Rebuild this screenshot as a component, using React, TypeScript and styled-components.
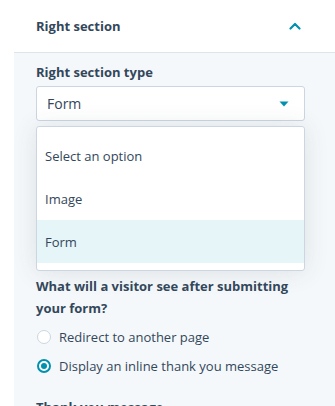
import React, { useState } from "react"
import styled, { createGlobalStyle } from "styled-components"

const Colors = {
    text: "#33475b",
    border: "#cbd6e2",
    divider: "#dfe3eb",
    panelBg: "#f5f8fa",
    teal: "#0091ae",
    highlight: "#e5f5f8",
}

const GlobalStyle = createGlobalStyle`
    html, body {
        margin: 0;
        padding: 0;
        background: #fff;
    }
    body {
        font-family: "Open Sans", "Liberation Sans", sans-serif;
        color: ${Colors.text};
        overflow: hidden;
    }
`

type SectionType = "" | "image" | "form"
type AfterSubmit = "redirect" | "inline"

const options: { value: SectionType; label: string }[] = [
    { value: "", label: "Select an option" },
    { value: "image", label: "Image" },
    { value: "form", label: "Form" },
]

const radios: { value: AfterSubmit; label: string }[] = [
    { value: "redirect", label: "Redirect to another page" },
    { value: "inline", label: "Display an inline thank you message" },
]

const ChevronUp = () => (
    <svg width="12" height="8" viewBox="0 0 12 8" fill="none">
        <path d="M1.5 6.5L6 2L10.5 6.5" stroke={Colors.teal} strokeWidth="2.2" strokeLinecap="round" strokeLinejoin="round" />
    </svg>
)

const Caret = () => (
    <svg width="10" height="6" viewBox="0 0 10 6">
        <path d="M0.5 0.5H9.5L5 5.5Z" fill={Colors.teal} />
    </svg>
)

export default function App() {
    const [sectionType, setSectionType] = useState<SectionType>("form")
    const [afterSubmit, setAfterSubmit] = useState<AfterSubmit>("inline")
    const current = options.find((o) => o.value === sectionType)

    return (
        <S.Page>
            <GlobalStyle />
            <S.Gutter />
            <S.Panel>
                <S.Header>
                    <S.HeaderTitle>Right section</S.HeaderTitle>
                    <ChevronUp />
                </S.Header>
                <S.Body>
                    <S.Label>Right section type</S.Label>
                    <S.Select>
                        <span>{current ? current.label : ""}</span>
                        <Caret />
                    </S.Select>
                    <S.Menu>
                        {options.map((o) => (
                            <S.Option
                                key={o.label}
                                $active={o.value === sectionType}
                                onClick={() => setSectionType(o.value)}
                            >
                                {o.label}
                            </S.Option>
                        ))}
                    </S.Menu>
                    <S.Question>What will a visitor see after submitting your form?</S.Question>
                    <S.RadioGroup>
                        {radios.map((r) => (
                            <S.RadioRow key={r.value} onClick={() => setAfterSubmit(r.value)}>
                                <S.RadioCircle $checked={afterSubmit === r.value} />
                                {r.label}
                            </S.RadioRow>
                        ))}
                    </S.RadioGroup>
                    <S.NextLabel>Thank you message</S.NextLabel>
                </S.Body>
            </S.Panel>
        </S.Page>
    )
}

const S = {
    Page: styled.div`
        display: flex;
        width: 335px;
        height: 406px;
        overflow: hidden;
    `,
    Gutter: styled.div`
        width: 14px;
        flex-shrink: 0;
        background: #fff;
    `,
    Panel: styled.div`
        flex: 1;
        display: flex;
        flex-direction: column;
    `,
    Header: styled.div`
        height: 52px;
        flex-shrink: 0;
        display: flex;
        align-items: center;
        justify-content: space-between;
        padding: 0 34px 0 22px;
        background: #fff;
        border-bottom: 1px solid ${Colors.divider};
    `,
    HeaderTitle: styled.div`
        font-size: 13px;
        font-weight: 700;
    `,
    Body: styled.div`
        flex: 1;
        background: ${Colors.panelBg};
        padding: 9px 30px 0 22px;
        display: flex;
        flex-direction: column;
    `,
    Label: styled.div`
        font-size: 13px;
        font-weight: 700;
        line-height: 20px;
        margin-bottom: 4px;
    `,
    Select: styled.div`
        height: 35px;
        box-sizing: border-box;
        display: flex;
        align-items: center;
        justify-content: space-between;
        padding: 0 15px 0 10px;
        background: #fff;
        border: 1px solid ${Colors.border};
        border-radius: 3px;
        font-size: 14px;
    `,
    Menu: styled.div`
        margin-top: 5px;
        padding: 7px 0 7px;
        background: #fff;
        border: 1px solid ${Colors.border};
        border-radius: 3px;
        box-shadow: 0 1px 24px rgba(45, 62, 80, 0.12);
    `,
    Option: styled.div<{ $active: boolean }>`
        height: 43px;
        display: flex;
        align-items: center;
        padding: 0 8px;
        font-size: 13px;
        background: ${(p) => (p.$active ? Colors.highlight : "transparent")};
        cursor: pointer;
    `,
    Question: styled.div`
        margin-top: 4px;
        font-size: 13px;
        font-weight: 700;
        line-height: 22px;
    `,
    RadioGroup: styled.div`
        margin-top: 7px;
        display: flex;
        flex-direction: column;
        gap: 7px;
    `,
    RadioRow: styled.label`
        height: 22px;
        display: flex;
        align-items: center;
        gap: 8px;
        font-size: 13px;
        cursor: pointer;
    `,
    RadioCircle: styled.span<{ $checked: boolean }>`
        width: 14px;
        height: 14px;
        margin-left: 1px;
        box-sizing: border-box;
        border-radius: 50%;
        background: #fff;
        border: ${(p) => (p.$checked ? `2px solid ${Colors.teal}` : `1px solid ${Colors.border}`)};
        display: flex;
        align-items: center;
        justify-content: center;
        &::after {
            content: "";
            width: 6px;
            height: 6px;
            border-radius: 50%;
            background: ${Colors.teal};
            display: ${(p) => (p.$checked ? "block" : "none")};
        }
    `,
    NextLabel: styled.div`
        margin-top: 20px;
        font-size: 13px;
        font-weight: 700;
        line-height: 20px;
    `,
}
